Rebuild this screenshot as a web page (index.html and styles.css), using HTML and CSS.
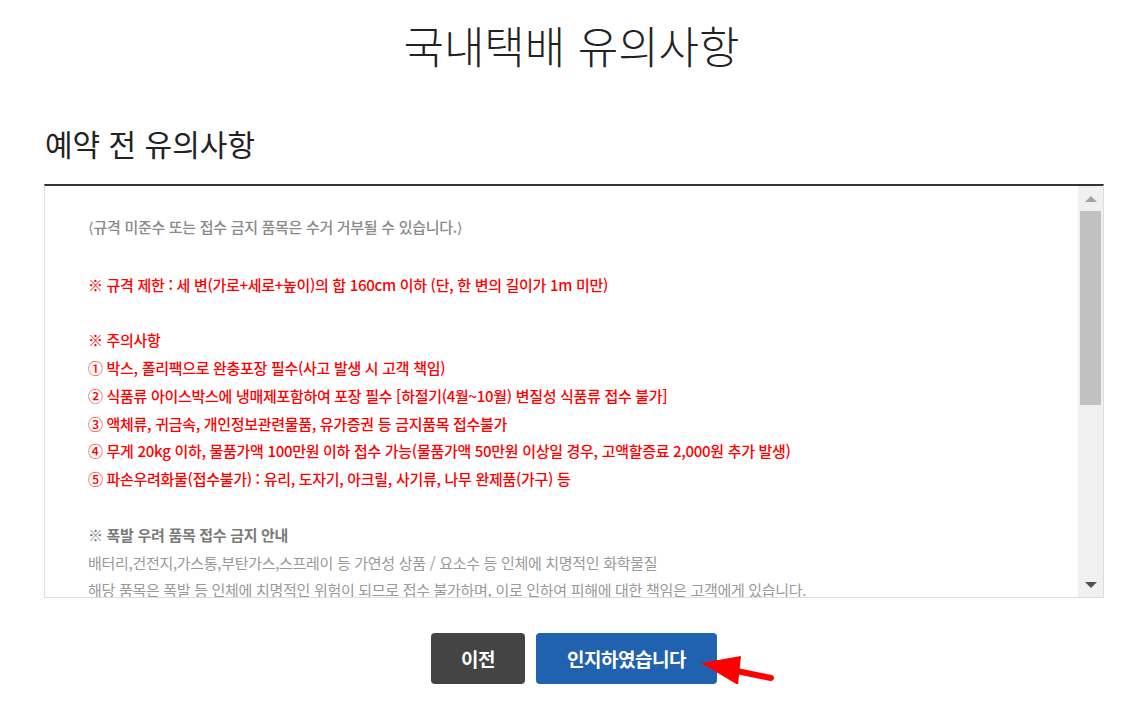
FILE: index.html
```html
<!DOCTYPE html>
<html lang="ko">
<head>
  <meta charset="UTF-8">
  <title>국내택배 유의사항</title>
  <link rel="stylesheet" href="styles.css">
</head>
<body>
  <header>
    <h1>국내택배 유의사항</h1>
  </header>
  <main>
    <h2 class="section-title">예약 전 유의사항</h2>
    <div class="terms-box">
      <div class="terms-text">
        <p class="gray mid"><span class="angle">⟨</span>규격 미준수 또는 접수 금지 품목은 수거 거부될 수 있습니다.<span class="angle">⟩</span></p>
        <p class="blank"></p>
        <p class="red">※ 규격 제한 : 세 변(가로+세로+높이)의 합 160cm 이하 (단, 한 변의 길이가 1m 미만)</p>
        <p class="blank"></p>
        <p class="red">※ 주의사항</p>
        <p class="red">① 박스, 폴리팩으로 완충포장 필수(사고 발생 시 고객 책임)</p>
        <p class="red">② 식품류 아이스박스에 냉매제포함하여 포장 필수 [하절기(4월~10월) 변질성 식품류 접수 불가]</p>
        <p class="red">③ 액체류, 귀금속, 개인정보관련물품, 유가증권 등 금지품목 접수불가</p>
        <p class="red">④ 무게 20kg 이하, 물품가액 100만원 이하 접수 가능(물품가액 50만원 이상일 경우, 고액할증료 2,000원 추가 발생)</p>
        <p class="red">⑤ 파손우려화물(접수불가) : 유리, 도자기, 아크릴, 사기류, 나무 완제품(가구) 등</p>
        <p class="blank"></p>
        <p class="gray strong">※ 폭발 우려 품목 접수 금지 안내</p>
        <p class="gray light">배터리,건전지,가스통,부탄가스,스프레이 등 가연성 상품 / 요소수 등 인체에 치명적인 화학물질</p>
        <p class="gray light">해당 품목은 폭발 등 인체에 치명적인 위험이 되므로 접수 불가하며, 이로 인하여 피해에 대한 책임은 고객에게 있습니다.</p>
        <p class="blank"></p>
      </div>
      <div class="scrollbar">
        <div class="scroll-btn"><span class="tri-up"></span></div>
        <div class="scroll-track"><div class="scroll-thumb"></div></div>
        <div class="scroll-btn"><span class="tri-down"></span></div>
      </div>
    </div>
    <div class="btn-row">
      <button class="btn btn-prev">이전</button>
      <button class="btn btn-ok">인지하였습니다
        <svg class="pointer" width="80" height="40" viewBox="0 0 80 40">
          <line x1="36" y1="22" x2="75" y2="30" stroke="#ff0000" stroke-width="6" stroke-linecap="round"/>
          <polygon points="5,15 45,8 42,37" fill="#ff0000"/>
        </svg>
      </button>
    </div>
  </main>
</body>
</html>
```

FILE: styles.css
```css
body {
  margin: 0;
  padding: 0;
  background-color: #ffffff;
  font-family: "Noto Sans CJK KR", "Noto Sans", sans-serif;
  color: #222;
}
header h1 {
  margin: 15px 0 0;
  font-size: 44px;
  line-height: 60px;
  font-weight: 300;
  text-align: center;
  color: #222;
}
main {
  width: 1060px;
  margin-left: 44px;
}
.section-title {
  margin: 48px 0 21px 1px;
  font-size: 30px;
  line-height: 40px;
  font-weight: 400;
  color: #222;
}
.terms-box {
  display: flex;
  height: 411px;
  border-top: 2px solid #333;
  border-left: 1px solid #ddd;
  border-right: 1px solid #ddd;
  border-bottom: 1px solid #ddd;
}
.terms-text {
  flex: 1;
  overflow: hidden;
  padding: 27px 0 0 43px;
  font-size: 15px;
  line-height: 27.8px;
  letter-spacing: -0.3px;
}
.terms-text p {
  margin: 0;
  white-space: nowrap;
}
.blank {
  height: 27.8px;
}
.angle {
  font-family: "DejaVu Sans", sans-serif;
  font-weight: 400;
}
.red {
  color: #ff0000;
  font-weight: 500;
}
.gray {
  color: #8a8a8a;
}
.mid {
  font-weight: 500;
}
.strong {
  font-weight: 700;
  color: #7a7a7a;
}
.light {
  color: #999999;
}
.scrollbar {
  width: 25px;
  display: flex;
  flex-direction: column;
  background-color: #f0f0f0;
}
.scroll-btn {
  height: 25px;
  display: flex;
  align-items: center;
  justify-content: center;
}
.scroll-track {
  flex: 1;
  padding: 0 2px;
}
.scroll-thumb {
  height: 194px;
  background-color: #c1c1c1;
}
.tri-up {
  border-left: 6px solid transparent;
  border-right: 6px solid transparent;
  border-bottom: 6px solid #a3a3a3;
}
.tri-down {
  border-left: 6px solid transparent;
  border-right: 6px solid transparent;
  border-top: 6px solid #505050;
}
.btn-row {
  display: flex;
  justify-content: center;
  gap: 11px;
  margin-top: 35px;
}
.btn {
  position: relative;
  height: 51px;
  border: none;
  border-radius: 4px;
  color: #ffffff;
  font-family: "Noto Sans CJK KR", "Noto Sans", sans-serif;
  font-size: 19px;
  font-weight: 700;
  letter-spacing: -0.5px;
  cursor: pointer;
}
.btn-prev {
  width: 94px;
  background-color: #444444;
}
.btn-ok {
  width: 181px;
  background-color: #2162b0;
}
.pointer {
  position: absolute;
  left: 160px;
  top: 15px;
  overflow: visible;
}
```
